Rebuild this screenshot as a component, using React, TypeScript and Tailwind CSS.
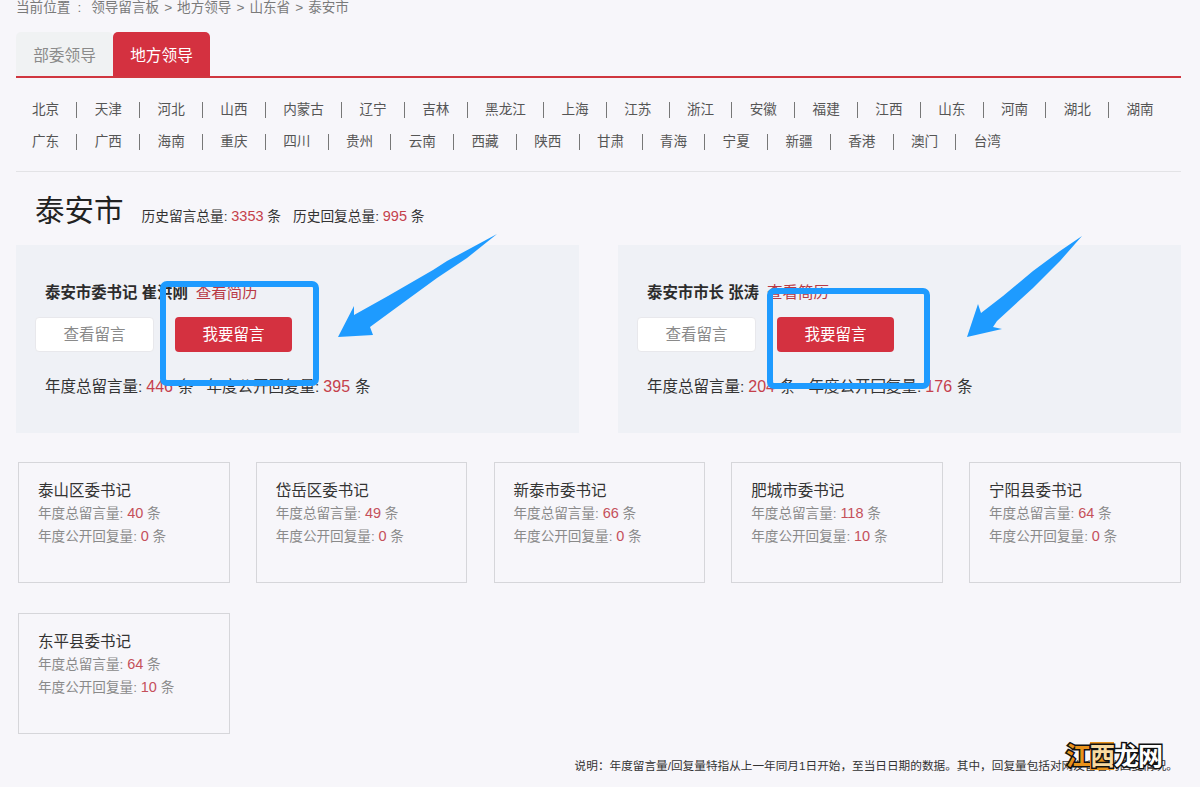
import React from "react";

const provinces = [
  "北京", "天津", "河北", "山西", "内蒙古", "辽宁", "吉林", "黑龙江", "上海", "江苏", "浙江", "安徽", "福建", "江西", "山东", "河南", "湖北", "湖南",
  "广东", "广西", "海南", "重庆", "四川", "贵州", "云南", "西藏", "陕西", "甘肃", "青海", "宁夏", "新疆", "香港", "澳门", "台湾",
];

const leaders = [
  { name: "泰安市委书记 崔洪刚", total: "446", reply: "395" },
  { name: "泰安市市长 张涛", total: "204", reply: "176" },
];

const counties = [
  { name: "泰山区委书记", total: 40, reply: 0 },
  { name: "岱岳区委书记", total: 49, reply: 0 },
  { name: "新泰市委书记", total: 66, reply: 0 },
  { name: "肥城市委书记", total: 118, reply: 10 },
  { name: "宁阳县委书记", total: 64, reply: 0 },
  { name: "东平县委书记", total: 64, reply: 10 },
];

function LeaderCard({ name, total, reply }: { name: string; total: string; reply: string }) {
  return (
    <div className="h-[188px] w-[563px] bg-[#eff1f6] pl-[19px] pt-[39px]">
      <p className="ml-[10px] h-[18px] text-[15.4px] leading-[18px] text-[#2c2c2c]">
        <span className="font-bold">{name}</span>
        <span className="ml-[8px] text-[15.5px] text-[#b93a45]">查看简历</span>
      </p>
      <div className="mt-[15px] flex gap-[21px]">
        <div className="flex h-[35px] w-[119px] items-center justify-center rounded-[4px] border border-[#e8e8ec] bg-white pt-px text-[15.5px] text-[#8a8a8a]">
          查看留言
        </div>
        <div className="flex h-[35px] w-[117px] items-center justify-center rounded-[4px] bg-[#d43140] pt-px text-[15.5px] text-white">
          我要留言
        </div>
      </div>
      <p className="ml-[10px] mt-[25px] flex h-[20px] items-center text-[15.5px] text-[#333]">
        年度总留言量: <span className="ml-[4px] text-[16px] text-[#c5404b]">{total}</span>
        <span className="ml-[5px]">条</span>
        <span className="ml-[13px]">年度公开回复量:</span>
        <span className="ml-[4px] text-[16px] text-[#c5404b]">{reply}</span>
        <span className="ml-[5px]">条</span>
      </p>
    </div>
  );
}

function CountyCard({ name, total, reply }: { name: string; total: number; reply: number }) {
  return (
    <div className="h-[121px] w-[211.5px] border border-[#d6d6da] pl-[19px] pt-[17px]">
      <p className="h-[22px] text-[15.5px] leading-[22px] text-[#333]">{name}</p>
      <p className="h-[23px] text-[13.6px] leading-[23px] text-[#8a8a8a]">
        年度总留言量: <span className="text-[14.5px] text-[#c5505a]">{total}</span> 条
      </p>
      <p className="h-[23px] text-[13.6px] leading-[23px] text-[#8a8a8a]">
        年度公开回复量: <span className="text-[14.5px] text-[#c5505a]">{reply}</span> 条
      </p>
    </div>
  );
}

export default function App() {
  return (
    <div className="relative h-[787px] w-[1200px] overflow-hidden bg-[#f7f6fa] px-4 font-['Liberation_Sans','Noto_Sans_CJK_SC',sans-serif]">
      <div className="flex h-[32px] gap-[5px] text-[13.6px] leading-[16px] text-[#7a7a7a]">
        <span>当前位置</span>
        <span className="mx-[2px]">:</span>
        <span className="ml-[3px]">领导留言板</span>
        <span>&gt;</span>
        <span>地方领导</span>
        <span>&gt;</span>
        <span>山东省</span>
        <span>&gt;</span>
        <span>泰安市</span>
      </div>

      <div className="flex h-[46px] w-[1165px] border-b-2 border-[#d0363f]">
        <div className="flex h-[44px] w-[97px] items-center justify-center rounded-t-[5px] bg-[#f0f2f3] pt-[3px] text-[15.7px] text-[#8a8a8a]">
          部委领导
        </div>
        <div className="flex h-[44px] w-[97px] items-center justify-center rounded-t-[5px] bg-[#d43140] pt-[3px] text-[15.7px] text-white">
          地方领导
        </div>
      </div>

      <ul className="ml-[-1.3px] mt-[16px] flex w-[1165px] flex-wrap">
        {provinces.map((p, i) => (
          <li key={p} className="flex h-[32px] items-center">
            <span
              className={
                i === 17 || i === provinces.length - 1
                  ? "px-[17.3px] text-[13.6px] leading-[16px] text-[#555]"
                  : "border-r border-[#777] px-[17.3px] text-[13.6px] leading-[16px] text-[#555]"
              }
            >
              {p}
            </span>
          </li>
        ))}
      </ul>

      <div className="mt-[13px] h-px w-[1165px] bg-[#e3e3e6]" />

      <div className="ml-[19px] mt-[19px] flex h-[40px] items-center">
        <h1 className="text-[29.5px] font-normal leading-[40px] text-[#222]">泰安市</h1>
        <p className="ml-[18px] mt-[12px] text-[13.7px] text-[#333]">
          历史留言总量: <span className="text-[14.5px] text-[#c5404b]">3353</span> 条
          <span className="ml-[12px]">历史回复总量: </span>
          <span className="text-[14.5px] text-[#c5404b]">995</span> 条
        </p>
      </div>

      <div className="mt-[14px] flex w-[1165px] justify-between">
        {leaders.map((l) => (
          <LeaderCard key={l.name} {...l} />
        ))}
      </div>

      <div className="ml-[2px] mt-[29px] grid grid-cols-[repeat(5,211.5px)] gap-x-[26.25px] gap-y-[30px]">
        {counties.map((c) => (
          <CountyCard key={c.name} {...c} />
        ))}
      </div>

      <p className="mt-[25px] w-[1162px] text-right text-[11.65px] leading-[14px] text-[#333]">
        说明：年度留言量/回复量特指从上一年同月1日开始，至当日日期的数据。其中，回复量包括对网友留言的回复情况。
      </p>

      {/* 截图上后加的蓝色标注 */}
      <svg className="pointer-events-none absolute left-0 top-0" width="1200" height="787" viewBox="0 0 1200 787">
        <rect x="163" y="284" width="153" height="99" rx="4" fill="none" stroke="#1e9bff" strokeWidth="6" />
        <path
          d="M497 234 L467 258 L437 278 L400 305 L370 327 L373 335 L338 337 L354 306 L354 315 L388 296 L433 270 L447 261 Z"
          fill="#1e9bff"
        />
        <rect x="770" y="291" width="157" height="95" rx="4" fill="none" stroke="#1e9bff" strokeWidth="6" />
        <path
          d="M1082 236 L1060 261 L1033 288 L997 321 L993 327 L1002 329 L967 337 L978 304 L981 313 L1003 296 L1033 271 L1060 251 Z"
          fill="#1e9bff"
        />
      </svg>

      {/* 水印 */}
      <div className="absolute left-[1066px] top-[742px] flex text-[25px] font-bold leading-[28px] tracking-[-1px] [-webkit-text-stroke:3px_#111] [paint-order:stroke_fill]">
        <span className="text-[#e8921c]">江</span>
        <span className="bg-[#e8921c] text-[#f8d9a0]">西</span>
        <span className="text-white">龙</span>
        <span className="text-white">网</span>
      </div>
    </div>
  );
}
